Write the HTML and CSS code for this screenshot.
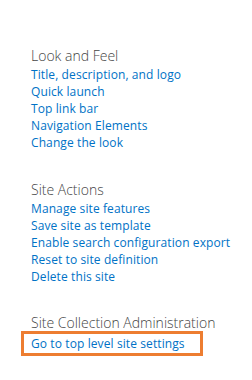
FILE: index.html
```html
<!DOCTYPE html>
<html lang="en">
<head>
  <meta charset="UTF-8">
  <title>Site Settings</title>
  <link rel="stylesheet" href="styles.css">
</head>
<body>
  <div class="settings">
    <div class="group">
      <h3>Look and Feel</h3>
      <ul>
        <li><a href="#">Title, description, and logo</a></li>
        <li><a href="#">Quick launch</a></li>
        <li><a href="#">Top link bar</a></li>
        <li><a href="#">Navigation Elements</a></li>
        <li><a href="#">Change the look</a></li>
      </ul>
    </div>

    <div class="group">
      <h3>Site Actions</h3>
      <ul>
        <li><a href="#">Manage site features</a></li>
        <li><a href="#">Save site as template</a></li>
        <li><a href="#">Enable search configuration export</a></li>
        <li><a href="#">Reset to site definition</a></li>
        <li><a href="#">Delete this site</a></li>
      </ul>
    </div>

    <div class="group">
      <h3>Site Collection Administration</h3>
      <ul>
        <li class="highlight"><a href="#">Go to top level site settings</a></li>
      </ul>
    </div>
  </div>
</body>
</html>
```

FILE: styles.css
```css
body {
  margin: 0;
  background-color: #fff;
  font-family: 'Open Sans', 'Noto Sans', sans-serif;
}

.settings {
  padding: 47px 0 0 31px;
}

.group {
  margin-bottom: 29px;
}

.group:first-child {
  margin-bottom: 30px;
}

h3 {
  margin: 0 0 1px;
  font-size: 14px;
  font-weight: 300;
  line-height: 18px;
  color: #444;
}

ul {
  list-style: none;
  margin: 0;
  padding: 0;
}

li {
  font-size: 12px;
  line-height: 17px;
  letter-spacing: 0.1px;
}

a {
  color: #0072c6;
  text-decoration: none;
}

.highlight {
  margin: -2px 0 0 -10px;
  width: 169px;
  padding: 1px 0 1px 7px;
  border: 3px solid #ed7d31;
}
```
